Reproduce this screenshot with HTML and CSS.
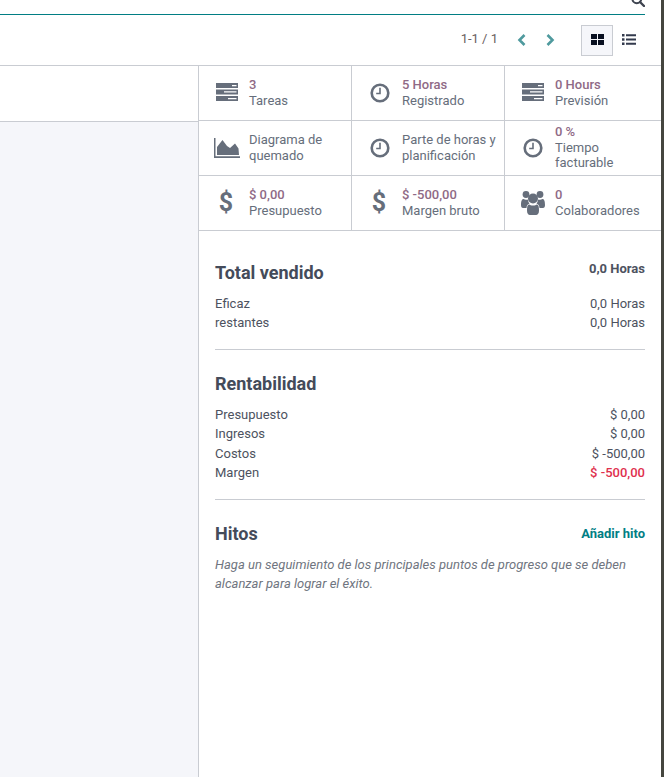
FILE: index.html
```html
<!DOCTYPE html>
<html lang="es">
<head>
<meta charset="utf-8">
<title>Proyecto</title>
<link rel="stylesheet" href="styles.css">
</head>
<body>
<svg class="defs" width="0" height="0" aria-hidden="true">
  <symbol id="i-tasks" viewBox="0 0 22 18">
    <path fill-rule="evenodd" d="M0 0h22v5H0zM16 2v1.300h4.500V2zM0 6.500h22v5H0zM8 8.300v1.300h12.500V8.300zM0 13h22v5H0zM12 15v1.300h8.500V15z"/>
  </symbol>
  <symbol id="i-clock" viewBox="0 0 20 20">
    <circle cx="10" cy="10" r="8.300" fill="none" stroke="currentColor" stroke-width="2.600"/>
    <path d="M10.800 4.800v6.500H6.200V9.700h3V4.800z"/>
  </symbol>
  <symbol id="i-area" viewBox="0 0 26 20">
    <path d="M0 0h1.500v18.300H26V20H0z"/>
    <path d="M3 17V9L8.500 2 13 8 16 10 21 5.500 24.500 10.500 25 17z"/>
  </symbol>
  <symbol id="i-users" viewBox="0 0 24 24">
    <circle cx="5" cy="3.500" r="3.400"/>
    <circle cx="19" cy="3.500" r="3.400"/>
    <path d="M0 14c0-3.500.7-6 2.500-6 1 .7 3.500 1 4.500.5.300 2 .6 3 1.500 4-1.800.8-2.800 2-3 4.500H2c-1.300 0-2-1-2-3zM24 14c0-3.500-.7-6-2.500-6-1 .7-3.500 1-4.500.5-.3 2-.6 3-1.500 4 1.800.8 2.800 2 3 4.500H22c1.300 0 2-1 2-3z"/>
    <circle cx="12" cy="7.500" r="5"/>
    <path d="M8 13.500c1 .5 2 1 4 1s3-.5 4-1c1.800.6 2 3 2 6 0 2.800-1.200 4.500-3 4.500H9c-1.800 0-3-1.700-3-4.500 0-3 .2-5.400 2-6z"/>
  </symbol>
</svg>
<div class="shell">
  <div class="app">
    <div class="search-row">
      <svg class="search-icon" viewBox="0 0 14 14" aria-hidden="true"><circle cx="5.800" cy="5.800" r="4.400" fill="none" stroke="currentColor" stroke-width="2"/><path d="M9 9l4 4" stroke="currentColor" stroke-width="2.400" stroke-linecap="round"/></svg>
    </div>
    <div class="toolbar">
      <span class="pager">1-1 / 1</span>
      <div class="arrows">
        <svg class="arrow" viewBox="0 0 10 14" aria-hidden="true"><path d="M7.500 2L2.500 7l5 5" fill="none" stroke="currentColor" stroke-width="2.600"/></svg>
        <svg class="arrow" viewBox="0 0 10 14" aria-hidden="true"><path d="M2.500 2l5 5-5 5" fill="none" stroke="currentColor" stroke-width="2.600"/></svg>
      </div>
      <button class="view view-active" type="button" aria-label="Kanban">
        <svg class="view-icon" viewBox="0 0 13 11" aria-hidden="true"><path d="M0 0h6v5H0zM7 0h6v5H7zM0 6h6v5H0zM7 6h6v5H7z"/></svg>
      </button>
      <button class="view" type="button" aria-label="Lista">
        <svg class="view-icon list-icon" viewBox="0 0 14 11" aria-hidden="true"><path d="M0 0h2.500v2.500H0zM4 .3h10v2H4zM0 4.200h2.500v2.500H0zM4 4.500h10v2H4zM0 8.400h2.500v2.500H0zM4 8.700h10v2H4z"/></svg>
      </button>
    </div>
    <div class="content">
      <div class="left">
        <div class="left-head"></div>
        <div class="left-body"></div>
      </div>
      <aside class="panel">
        <div class="stats">
          <div class="stat"><svg class="ic ic-tasks"><use href="#i-tasks"/></svg><div class="stat-text"><b>3</b><span>Tareas</span></div></div>
          <div class="stat"><svg class="ic ic-clock"><use href="#i-clock"/></svg><div class="stat-text"><b>5 Horas</b><span>Registrado</span></div></div>
          <div class="stat"><svg class="ic ic-tasks"><use href="#i-tasks"/></svg><div class="stat-text"><b>0 Hours</b><span>Previsión</span></div></div>
          <div class="stat"><svg class="ic ic-area"><use href="#i-area"/></svg><div class="stat-text"><span>Diagrama de quemado</span></div></div>
          <div class="stat"><svg class="ic ic-clock"><use href="#i-clock"/></svg><div class="stat-text"><span>Parte de horas y planificación</span></div></div>
          <div class="stat"><svg class="ic ic-clock"><use href="#i-clock"/></svg><div class="stat-text stat-tall"><b>0 %</b><span>Tiempo facturable</span></div></div>
          <div class="stat"><span class="ic ic-dollar">$</span><div class="stat-text"><b>$ 0,00</b><span>Presupuesto</span></div></div>
          <div class="stat"><span class="ic ic-dollar">$</span><div class="stat-text"><b>$ -500,00</b><span>Margen bruto</span></div></div>
          <div class="stat"><svg class="ic ic-users"><use href="#i-users"/></svg><div class="stat-text"><b>0</b><span>Colaboradores</span></div></div>
        </div>
        <div class="details">
          <section class="sec sec-sold">
            <div class="sec-head"><h3>Total vendido</h3><strong class="head-value">0,0 Horas</strong></div>
            <div class="rows">
              <div class="row"><span>Eficaz</span><span>0,0 Horas</span></div>
              <div class="row"><span>restantes</span><span>0,0 Horas</span></div>
            </div>
          </section>
          <section class="sec sec-profit">
            <div class="sec-head"><h3>Rentabilidad</h3></div>
            <div class="rows">
              <div class="row"><span>Presupuesto</span><span>$ 0,00</span></div>
              <div class="row"><span>Ingresos</span><span>$ 0,00</span></div>
              <div class="row"><span>Costos</span><span>$ -500,00</span></div>
              <div class="row"><span>Margen</span><span class="neg">$ -500,00</span></div>
            </div>
          </section>
          <section class="sec sec-miles">
            <div class="sec-head center"><h3>Hitos</h3><a class="add" href="#">Añadir hito</a></div>
            <p class="hint">Haga un seguimiento de los principales puntos de progreso que se deben alcanzar para lograr el éxito.</p>
          </section>
        </div>
      </aside>
    </div>
  </div>
  <div class="strip"></div>
</div>
</body>
</html>
```
FILE: styles.css
```css
* { box-sizing: border-box; }
html, body { margin: 0; height: 100%; }
body {
  font-family: Roboto, "Noto Sans", sans-serif;
  font-size: 13px;
  line-height: 1.5;
  color: #4d5260;
  background: #fff;
  overflow: hidden;
}
.defs { position: absolute; }
.shell { display: flex; height: 777px; }
.strip { width: 3px; background: #45463f; }
.app { flex: 1; min-width: 0; display: flex; flex-direction: column; }

.search-row {
  height: 15px;
  margin-right: 16px;
  border-bottom: 1px solid #017e84;
  display: flex;
  justify-content: flex-end;
  align-items: flex-end;
  overflow: hidden;
}
.search-icon { width: 14px; height: 14px; margin: 0 0 7px 0; color: #3f4450; flex: none; }

.toolbar {
  height: 51px;
  border-bottom: 1px solid #c9ccd2;
  display: flex;
  align-items: center;
  justify-content: flex-end;
  padding: 0 16px 0 0;
}
.pager { color: #6b615f; font-size: 13px; margin: 0 19px 2px 0; }
.arrows { display: flex; gap: 18px; margin: 0 26px 1px 0; }
.arrow { width: 10px; height: 14px; color: #4f9a9e; display: block; }
.view {
  width: 32px;
  height: 31px;
  padding: 0 0 1px;
  background: none;
  border: 1px solid transparent;
  display: flex;
  align-items: center;
  justify-content: center;
}
.view-active { background: #f5f6fa; border-color: #c9ccd2; }
.view-icon { width: 13px; height: 11px; fill: #081020; }
.list-icon { width: 14px; fill: #333a4d; }

.content { flex: 1; display: flex; min-height: 0; }
.left { width: 199px; border-right: 1px solid #c9ccd2; display: flex; flex-direction: column; }
.left-head { height: 56px; border-bottom: 1px solid #c9ccd2; }
.left-body { flex: 1; background: #f5f6fa; }
.panel { flex: 1; min-width: 0; }

.stats {
  display: grid;
  grid-template-columns: 153px 153px 1fr;
  grid-auto-rows: 55px;
}
.stat {
  display: flex;
  align-items: center;
  border-right: 1px solid #c9ccd2;
  border-bottom: 1px solid #c9ccd2;
  padding-left: 16px;
  color: #666e7b;
  fill: #666e7b;
}
.stat:nth-child(3n) { border-right: 0; }
.ic { flex: none; display: block; width: 24px; margin-right: 10px; }
.ic-tasks { width: 22px; height: 18px; margin: 0 11px 2px 1px; }
.ic-clock { width: 20px; height: 20px; margin: 0 12px 1px 2px; color: #666e7b; }
.ic-area { width: 26px; height: 20px; margin-left: -1px; margin-right: 9px; }
.ic-users { width: 24px; height: 24px; }
.ic-dollar {
  font-size: 25px;
  font-weight: 700;
  line-height: 28px;
  text-align: center;
  margin-left: -1px;
  margin-right: 11px;
}
.stat-text { line-height: 15.6px; min-width: 0; padding-right: 4px; }
.stat-tall { padding-bottom: 1px; }
.stat-text b { display: block; font-weight: 500; color: #8f6a86; }
.stat-text span { display: block; }

.details { padding: 0 16px; }
.sec { border-bottom: 1px solid #c9ccd2; }
.sec:last-child { border-bottom: 0; }
.sec-sold { padding: 31px 0 16px; }
.sec-profit { padding: 23px 0 16.5px; }
.sec-miles { padding: 23px 0 0; }
.sec-head { display: flex; justify-content: space-between; align-items: flex-start; margin-bottom: 10px; }
.sec-profit .sec-head { margin-bottom: 10.5px; }
.sec-sold .sec-head { align-items: flex-start; }
.sec-head.center { align-items: center; margin-bottom: 10px; }
h3 { margin: 0; font-size: 18px; font-weight: 700; line-height: 21.6px; color: #444b5a; }
.head-value { font-weight: 700; line-height: 15.6px; margin-top: -1px; }
.row { display: flex; justify-content: space-between; }
.neg { color: #e0304e; font-weight: 500; }
.add { color: #017e84; font-weight: 700; text-decoration: none; }
.hint { margin: 0; font-style: italic; color: #6f7580; line-height: 19.5px; }
```
